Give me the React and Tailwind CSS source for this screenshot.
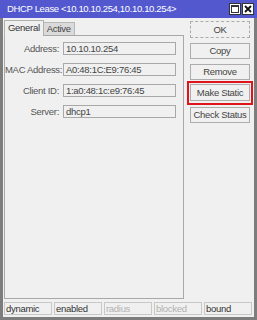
import React from "react";

const rows = [
  ["Address:", "10.10.10.254"],
  ["MAC Address:", "A0:48:1C:E9:76:45"],
  ["Client ID:", "1:a0:48:1c:e9:76:45"],
  ["Server:", "dhcp1"],
];

const status = [
  ["dynamic", "text-[#333]"],
  ["enabled", "text-[#333]"],
  ["radius", "text-[#b0b0b0]"],
  ["blocked", "text-[#b0b0b0]"],
  ["bound", "text-[#333]"],
];

function Btn({ children, className = "" }) {
  return (
    <div
      className={`h-[16px] w-[60px] border border-[#adadad] bg-[#f0f0f0] flex items-center justify-center text-[9.5px] tracking-[-0.3px] whitespace-nowrap leading-none text-[#444] ${className}`}
    >
      {children}
    </div>
  );
}

export default function App() {
  return (
    <div
      className="w-[257px] h-[320px] bg-[#f0f0f0] overflow-hidden flex flex-col"
      style={{ fontFamily: '"Liberation Sans", Arial, sans-serif' }}
    >
      {/* title bar */}
      <div className="h-[18px] shrink-0 bg-[#5358cf] flex items-center pl-[7px] pr-[3px]">
        <span className="text-white text-[9.5px] leading-none tracking-[-0.35px] whitespace-nowrap flex-1">
          DHCP Lease &lt;10.10.10.254,10.10.10.254&gt;
        </span>
        <div className="flex gap-[1px]">
          <div className="w-[12px] h-[12px] bg-white border border-[#333] flex items-center justify-center">
            <div className="w-[8px] h-[8px] border border-[#333] border-t-2"></div>
          </div>
          <div className="w-[12px] h-[12px] bg-white border border-[#333] flex items-center justify-center">
            <svg width="8" height="8" viewBox="0 0 8 8">
              <path d="M1 1L7 7M7 1L1 7" stroke="#111" strokeWidth="1.8" />
            </svg>
          </div>
        </div>
      </div>

      {/* body */}
      <div className="flex-1 flex flex-col border-x-[3px] border-b-[3px] border-[#7d7d7d]">
        <div className="flex flex-1 pl-[1px] pt-[1px]">
          {/* left column */}
          <div className="flex flex-col w-[180px]">
            <div className="flex items-end h-[16px]">
              <div className="h-[16px] px-[3px] border border-b-0 border-[#b0b0b0] bg-[#f0f0f0] flex items-center text-[9.5px] tracking-[-0.3px] text-[#333] relative top-[1px]">
                General
              </div>
              <div className="h-[13px] px-[3px] border border-l-0 border-b-0 border-[#b8b8b8] bg-[#dadada] flex items-center text-[9.5px] tracking-[-0.3px] text-[#444]">
                Active
              </div>
            </div>
            <div className="h-[264px] border border-[#a8a8a8] flex flex-col pt-[6px] gap-[8px]">
              {rows.map(([l, v]) => (
                <div key={l} className="flex items-center">
                  <div className="w-[54px] text-right text-[9.5px] tracking-[-0.3px] whitespace-nowrap text-[#555] leading-none">
                    {l}
                  </div>
                  <div className="ml-[4px] w-[113px] h-[13px] border border-[#a8a8a8] bg-[#f0f0f0] flex items-center px-[2px] text-[9.5px] tracking-[-0.3px] whitespace-nowrap text-[#444] leading-none">
                    {v}
                  </div>
                </div>
              ))}
            </div>
          </div>

          {/* right column */}
          <div className="flex flex-col ml-[6px] pt-[2px] gap-[5px]">
            <Btn className="h-[17px] border-dashed border-[#888]">OK</Btn>
            <Btn>Copy</Btn>
            <Btn>Remove</Btn>
            <div className="relative -mt-[1px]">
              <Btn className="h-[17px]">Make Static</Btn>
              <div className="absolute -left-[3px] -top-[3px] w-[66px] h-[24px] border-[2.5px] border-[#e0141b]"></div>
            </div>
            <Btn className="mt-[1px]">Check Status</Btn>
          </div>
        </div>

        {/* status bar */}
        <div className="flex gap-[2px] px-[1px] pb-[2px] pt-[2px]">
          {status.map(([t, c]) => (
            <div
              key={t}
              className={`w-[48px] h-[13px] border border-[#c8c8c8] flex items-center px-[1px] text-[9.5px] tracking-[-0.3px] leading-none ${c}`}
            >
              {t}
            </div>
          ))}
        </div>
      </div>
    </div>
  );
}
